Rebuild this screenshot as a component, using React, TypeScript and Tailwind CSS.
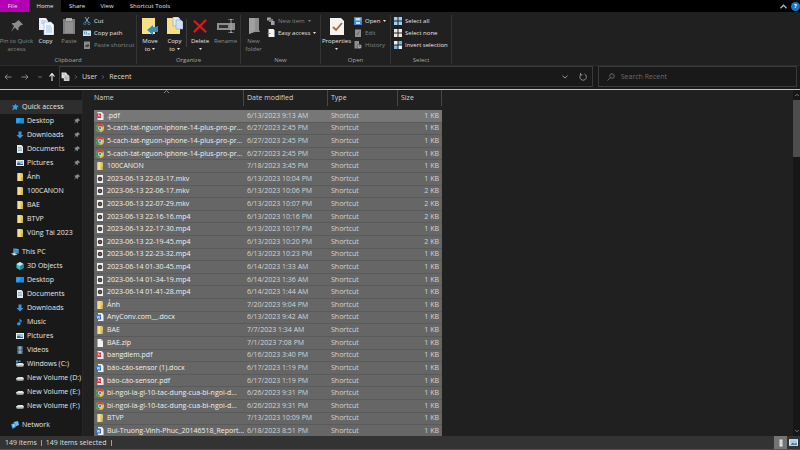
import React from "react";

type IconName =
  | "pdf" | "chrome" | "folder" | "media" | "docx" | "zip" | "star" | "desktop" | "down" | "doc"
  | "pictures" | "pc" | "cube" | "music" | "video" | "windrive" | "drive" | "network";

function Icon({ name, className = "size-2" }: { name: IconName; className?: string }) {
  return (
    <svg viewBox="0 0 16 16" className={`${className} shrink-0`} aria-hidden="true">
      {name === "pdf" && (
        <>
          <path d="M3 0h8l4 4v12H3z" fill="#f1eded" />
          <path d="M1 3h9v9H1z" fill="#c9373b" />
          <path d="M3 10c3-2 3-5 2-5s1 4 4 3" stroke="#fff" fill="none" strokeWidth="1.3" />
        </>
      )}
      {name === "docx" && (
        <>
          <path d="M4 0h8l3 4v12H4z" fill="#edf1f8" />
          <path d="M0 3h10v10H0z" fill="#2f66b5" />
          <path d="M2 5l1.500 6L5 6l1.500 5L8 5" stroke="#fff" fill="none" strokeWidth="1.200" />
        </>
      )}
      {name === "chrome" && (
        <>
          <circle cx="8" cy="8" r="8" fill="#e8c33a" />
          <path d="M8 8L1 4a8 8 0 0 1 14 0z" fill="#d5402f" />
          <path d="M8 8L1 4a8 8 0 0 0 6 12z" fill="#38945a" />
          <circle cx="8" cy="8" r="4" fill="#f4f4f4" />
          <circle cx="8" cy="8" r="2.800" fill="#4a84d8" />
        </>
      )}
      {name === "folder" && (
        <>
          <path d="M3 0h9l2 2v14H3z" fill="#dfc56c" />
          <path d="M3 0h6v16H3z" fill="#f3de92" />
          <path d="M11 9h3v7h-3z" fill="#c9a94b" />
        </>
      )}
      {name === "media" && (
        <>
          <path d="M2 0h12v16H2z" fill="#f1f1f1" />
          <circle cx="8" cy="8" r="4.500" fill="#3b3638" />
          <path d="M7 6l3 2-3 2z" fill="#e98a55" />
        </>
      )}
      {name === "zip" && (
        <>
          <path d="M3 0h7l4 4v12H3z" fill="#f1f1f1" />
          <path d="M10 0l4 4h-4z" fill="#b9b9b9" />
        </>
      )}
      {name === "star" && <path d="M9 1l2 4 5 1-4 3 0 5-4-2-6 3 3-6-3-4h5z" fill="#3aa0dd" />}
      {name === "desktop" && (
        <>
          <path d="M0 2h16v11H0z" fill="#1d8ae0" />
          <path d="M0 13h16v1H0z" fill="#0e5a9c" />
          <path d="M1 3h9l-6 9H1z" fill="#36a3f3" />
        </>
      )}
      {name === "down" && <path d="M5 1h6v7h4l-7 7-7-7h4z" fill="#3f93d6" />}
      {name === "doc" && (
        <>
          <path d="M2 0h9l3 3v13H2z" fill="#dfe9f0" />
          <path d="M4 5h7M4 8h8M4 11h8" stroke="#6f92ab" strokeWidth="1.300" />
        </>
      )}
      {name === "pictures" && (
        <>
          <path d="M0 2h16v12H0z" fill="#e8f0f6" />
          <path d="M2 4h12v5H2z" fill="#8ac4ea" />
          <path d="M2 12V9l4-2 4 3 4-1v3z" fill="#39607d" />
        </>
      )}
      {name === "pc" && (
        <>
          <path d="M5 1l10 1v9L5 10z" fill="#8fd0f4" />
          <path d="M6 2l8 1v7L6 9z" fill="#3b8ed0" />
          <path d="M0 11l7-1 6 3-7 2z" fill="#cfdde6" />
        </>
      )}
      {name === "cube" && (
        <>
          <path d="M8 0l7 4v8l-7 4-7-4V4z" fill="#43b8c8" />
          <path d="M8 0l7 4-7 4-7-4z" fill="#b9eef2" />
          <path d="M8 8l7-4v8l-7 4z" fill="#1c8fa4" />
        </>
      )}
      {name === "music" && (
        <path d="M7 0c1 4 6 4 5 9-1-2-2-3-3-3v6a3.500 3 0 1 1-2-3z" fill="#2c9ce6" />
      )}
      {name === "video" && (
        <>
          <path d="M2 0h12v16H2z" fill="#596069" />
          <path d="M5 1h6v6H5zM5 9h6v6H5z" fill="#7bb4d6" />
          <path d="M3.500 0v16M12.500 0v16" stroke="#16181a" strokeDasharray="1.500 1.500" />
        </>
      )}
      {(name === "drive" || name === "windrive") && (
        <>
          <path d="M0 9l5-3h8l3 3v3l-3 2H3l-3-2z" fill="#8c8f92" />
          <path d="M0 9l5-3h8l3 3-3 2H3z" fill="#e2e4e6" />
        </>
      )}
      {name === "windrive" && <path d="M0 1h4v3H0zM5 1h4v3H5zM0 5h4v3H0z" fill="#24b5e4" />}
      {name === "network" && (
        <>
          <path d="M5 2l9-2 2 8-7 3z" fill="#6cc0ef" />
          <path d="M0 6l8-2 2 8-7 4z" fill="#3391cc" />
          <path d="M2 7l5-1 1 5-4 2z" fill="#8ed6f8" />
        </>
      )}
    </svg>
  );
}

function PinShape({ className }: { className: string }) {
  return (
    <svg viewBox="0 0 16 16" className={`${className} shrink-0`} aria-hidden="true">
      <path d="M10 0l6 6-2 1-1 0-3 3 0 3-1 1-4-4-5 6 4-8-3-3 1-1 3 0 4-3z" fill="#8a8d90" />
    </svg>
  );
}

function Caret() {
  return (
    <svg viewBox="0 0 6 4" className="inline-block h-[2px] w-[3px]" aria-hidden="true">
      <path d="M0 0h6L3 4z" fill="currentColor" />
    </svg>
  );
}

function BigButton({ icon, lines, width, caret, dim }: {
  icon: React.ReactNode; lines: string[]; width: string; caret?: boolean; dim?: boolean;
}) {
  return (
    <button className={`flex shrink-0 flex-col items-center ${width} ${dim ? "text-[#8c8c8c]" : "text-[#e4e4e4]"}`}>
      <span className="flex h-[22px] items-center justify-center">{icon}</span>
      {lines.map((line, i) => (
        <span key={line} className="flex h-2 items-center gap-[2px] whitespace-nowrap leading-[8px]">
          {line}
          {caret && lines.length > 1 && i === lines.length - 1 && <Caret />}
        </span>
      ))}
      {caret && lines.length === 1 && <span className="flex h-2 items-center"><Caret /></span>}
    </button>
  );
}

function SmallButton({ icon, label, caret, dim }: {
  icon: React.ReactNode; label: string; caret?: boolean; dim?: boolean;
}) {
  return (
    <button className={`flex h-3 items-center gap-[3px] whitespace-nowrap ${dim ? "text-[#858585]" : "text-[#e4e4e4]"}`}>
      {icon}
      <span>{label}</span>
      {caret && <Caret />}
    </button>
  );
}

function Group({ label, width, children }: { label: string; width: string; children: React.ReactNode }) {
  return (
    <section aria-label={label} className={`flex shrink-0 flex-col border-r border-[#343434] ${width}`}>
      <div className="flex h-[42px]">{children}</div>
      <div className="text-center leading-[8px] text-[#a8a8a8]">{label}</div>
    </section>
  );
}

function Glyph({ children, className = "size-2", box = "0 0 16 16" }: {
  children: React.ReactNode; className?: string; box?: string;
}) {
  return <svg viewBox={box} className={`${className} shrink-0`} aria-hidden="true">{children}</svg>;
}

const pages = (
  <Glyph className="h-[18px] w-4" box="0 0 16 18">
    <path d="M1 1h7l2 3v9H1z" fill="#e9f1fb" />
    <path d="M6 5h7l3 3v10H6z" fill="#f4f8fd" stroke="#8fb2d9" strokeWidth=".6" />
    <path d="M3 4h4M3 6h3M8 9h5M8 11h6M8 13h6M8 15h6" stroke="#8fb2d9" strokeWidth=".8" />
  </Glyph>
);

function Ribbon() {
  return (
    <div className="flex h-[54px] shrink-0 border-b border-[#2c2c2c] bg-[#202020] pt-[3px] pb-[1px] text-[6px]">
      <Group label="Clipboard" width="w-[137px]">
        <BigButton dim width="w-[33px]" lines={["Pin to Quick", "access"]} icon={<PinShape className="size-3" />} />
        <BigButton width="w-[25px]" lines={["Copy"]} icon={pages} />
        <BigButton dim width="w-[22px]" lines={["Paste"]} icon={
          <Glyph className="h-[18px] w-3" box="0 0 12 18">
            <path d="M0 2h12v15H0z" fill="#7e7e7e" />
            <path d="M3 1h6v3H3z" fill="#b0b0b0" />
            <path d="M2 5h8v11H2z" fill="#909090" />
          </Glyph>
        } />
        <div className="flex flex-col pl-[3px]">
          <SmallButton label="Cut" icon={
            <Glyph>
              <path d="M4 0l7 11M12 0L5 11" stroke="#b8d0e2" strokeWidth="1.500" />
              <circle cx="3.500" cy="13" r="2.300" fill="none" stroke="#3d8fd0" strokeWidth="1.500" />
              <circle cx="12" cy="13" r="2.300" fill="none" stroke="#3d8fd0" strokeWidth="1.500" />
            </Glyph>
          } />
          <SmallButton label="Copy path" icon={
            <Glyph>
              <path d="M0 3h16v11H0z" fill="#cfe6f7" />
              <path d="M2 5l2 6M6 5l2 6M10 10h4" stroke="#286ca5" strokeWidth="1.500" />
            </Glyph>
          } />
          <SmallButton dim label="Paste shortcut" icon={
            <Glyph>
              <path d="M2 1h12v15H2z" fill="#8b8b8b" />
              <path d="M5 12V8h4V5l4 4-4 4v-2" fill="#393939" />
            </Glyph>
          } />
        </div>
      </Group>
      <Group label="Organize" width="w-[104px]">
        <BigButton caret width="w-[26px]" lines={["Move", "to"]} icon={
          <Glyph className="h-[18px] w-4" box="0 0 16 18">
            <path d="M0 1h13v16H0z" fill="#f7df86" />
            <path d="M16 9v6h-5v3l-6-5 6-5v2h2z" fill="#3d8cc0" />
          </Glyph>
        } />
        <BigButton caret width="w-[23px]" lines={["Copy", "to"]} icon={
          <Glyph className="h-[18px] w-4" box="0 0 16 18">
            <path d="M0 1h13v16H0z" fill="#f7df86" />
            <path d="M6 0h5l2 2v7H6z" fill="#e3eefa" stroke="#7ba5d2" strokeWidth=".6" />
            <path d="M9 3h5l2 2v7H9z" fill="#cfe1f5" stroke="#7ba5d2" strokeWidth=".6" />
          </Glyph>
        } />
        <div className="mt-1 h-[28px] border-r border-[#3c3c3c]" />
        <BigButton caret width="w-[26px]" lines={["Delete"]} icon={
          <Glyph className="size-[14px]">
            <path d="M1 2l14 13M15 1L1 15" stroke="#d01c1f" strokeWidth="2.600" />
          </Glyph>
        } />
        <BigButton dim width="w-[25px]" lines={["Rename"]} icon={
          <Glyph className="h-[14px] w-[18px]" box="0 0 18 14">
            <path d="M0 4h18v7H0z" fill="#8e8e8e" />
            <path d="M2 6h9v3H2z" fill="#303030" />
            <path d="M11 0h2l1 1 1-1h2M14 1v12M11 14h2l1-1 1 1h2" stroke="#a5a5a5" fill="none" />
          </Glyph>
        } />
      </Group>
      <Group label="New" width="w-[80px]">
        <BigButton dim width="w-[25px]" lines={["New", "folder"]} icon={
          <Glyph className="h-4 w-3" box="0 0 12 16">
            <path d="M1 0h10v12l1 2H7l-6 2z" fill="#8d8d8d" />
            <path d="M1 0h6v13l-6 3z" fill="#a0a0a0" />
          </Glyph>
        } />
        <div className="flex flex-col pl-[1px]">
          <SmallButton dim caret label="New item" icon={
            <Glyph>
              <path d="M0 1h8v6H0z" fill="#a0a0a0" />
              <path d="M4 4h8v6H4z" fill="#7c7c7c" />
              <path d="M8 8h7v8H8z" fill="#a5a5a5" />
            </Glyph>
          } />
          <SmallButton caret label="Easy access" icon={
            <Glyph>
              <path d="M3 0h10l2 3v13H3z" fill="#f3f3f3" />
              <path d="M1 8h6v2H1z" fill="#4d97d2" />
            </Glyph>
          } />
        </div>
      </Group>
      <Group label="Open" width="w-[70px]">
        <BigButton caret width="w-[31px]" lines={["Properties"]} icon={
          <Glyph className="h-[17px] w-[14px]" box="0 0 14 17">
            <path d="M0 0h11l3 3v14H0z" fill="#f5f3f1" />
            <path d="M3 9l3 3 6-7" stroke="#a9653d" strokeWidth="1.800" fill="none" />
          </Glyph>
        } />
        <div className="flex flex-col pl-[2px]">
          <SmallButton caret label="Open" icon={
            <Glyph>
              <path d="M0 0h16v16H0z" fill="#4787d0" />
              <path d="M3 2h10v5H3zM4 10h8v4H4z" fill="#c5dff7" />
            </Glyph>
          } />
          <SmallButton dim label="Edit" icon={
            <Glyph>
              <path d="M2 1h12v15H2z" fill="#929292" />
              <path d="M5 12l6-7" stroke="#606060" strokeWidth="2" />
            </Glyph>
          } />
          <SmallButton dim label="History" icon={
            <Glyph>
              <path d="M1 0h9v15H1z" fill="#8d8d8d" />
              <circle cx="11" cy="11" r="4.500" fill="#aaa" stroke="#333" />
              <path d="M11 8v3h2" stroke="#333" fill="none" />
            </Glyph>
          } />
        </div>
      </Group>
      <Group label="Select" width="w-[61px]">
        <div className="flex flex-col pl-[3px]">
          {[
            { label: "Select all", a: "#9bd2f7", b: "#9bd2f7" },
            { label: "Select none", a: "#f0e7df", b: "#f0e7df" },
            { label: "Invert selection", a: "#e9eef3", b: "#6fb8ee" },
          ].map(({ label, a, b }) => (
            <SmallButton key={label} label={label} icon={
              <Glyph>
                <path d="M0 0h7v7H0zM9 9h7v7H9z" fill={a} />
                <path d="M9 0h7v7H9zM0 9h7v7H0z" fill={b} />
              </Glyph>
            } />
          ))}
        </div>
      </Group>
    </div>
  );
}

function AddressRow() {
  return (
    <div className="flex h-[23px] shrink-0 bg-[#191919] pr-[3px] pb-[2px]">
      <nav aria-label="History" className="flex w-[59px] shrink-0 items-center">
        <button aria-label="Back" className="flex w-4 justify-center">
          <Glyph><path d="M15 8H2M7 3L2 8l5 5" stroke="#9a9a9a" strokeWidth="1.700" fill="none" /></Glyph>
        </button>
        <button aria-label="Forward" className="flex w-[18px] justify-center">
          <Glyph><path d="M1 8h13M9 3l5 5-5 5" stroke="#9a9a9a" strokeWidth="1.700" fill="none" /></Glyph>
        </button>
        <button aria-label="Recent locations" className="flex w-[11px] justify-center">
          <Glyph className="size-1"><path d="M1 4l7 7 7-7" stroke="#9a9a9a" strokeWidth="3" fill="none" /></Glyph>
        </button>
        <button aria-label="Up" className="flex w-[13px] justify-center">
          <Glyph><path d="M8 16V2M3 7l5-6 5 6" stroke="#f2f2f2" strokeWidth="2.200" fill="none" /></Glyph>
        </button>
      </nav>
      <div className="flex min-w-0 flex-1 items-center border border-[#3b3b3b] text-[#dcdcdc]">
        <Glyph className="ml-[1px] size-[9px]">
          <path d="M1 1h8l2 3v7H1z" fill="#e3e3e3" />
          <path d="M5 5h8l2 3v8H5z" fill="#cdcdcd" />
          <path d="M3 4h4M7 9h5M7 12h5" stroke="#848484" />
        </Glyph>
        {["User", "Recent"].map((part) => (
          <React.Fragment key={part}>
            <Glyph className="mx-[4px] size-1"><path d="M4 1l7 7-7 7" stroke="#8a8a8a" strokeWidth="2.500" fill="none" /></Glyph>
            <button>{part}</button>
          </React.Fragment>
        ))}
        <button aria-label="Previous locations" className="ml-auto">
          <Glyph className="size-[6px]"><path d="M1 4l7 7 7-7" stroke="#a0a0a0" strokeWidth="2.500" fill="none" /></Glyph>
        </button>
        <button aria-label="Refresh" className="mr-[5px] ml-[11px]">
          <Glyph><path d="M4 3a6.500 6.500 0 1 0 7-1M3 0v4h4" stroke="#a0a0a0" strokeWidth="1.700" fill="none" /></Glyph>
        </button>
      </div>
      <label className="ml-[5px] flex w-1/4 items-center gap-[6px] border border-[#3b3b3b] pl-2">
        <Glyph>
          <circle cx="10" cy="6" r="4.500" stroke="#808080" strokeWidth="1.500" fill="none" />
          <path d="M6 10l-5 5" stroke="#808080" strokeWidth="1.500" />
        </Glyph>
        <input aria-label="Search Recent" placeholder="Search Recent" className="min-w-0 flex-1 bg-transparent outline-none placeholder:text-[#6c6c6c]" />
      </label>
    </div>
  );
}

type Place = { icon: IconName; label: string; pinned?: boolean };

const sections: { head: Place; items: Place[] }[] = [
  {
    head: { icon: "star", label: "Quick access" },
    items: [
      { icon: "desktop", label: "Desktop", pinned: true },
      { icon: "down", label: "Downloads", pinned: true },
      { icon: "doc", label: "Documents", pinned: true },
      { icon: "pictures", label: "Pictures", pinned: true },
      { icon: "folder", label: "Ảnh", pinned: true },
      { icon: "folder", label: "100CANON" },
      { icon: "folder", label: "BAE" },
      { icon: "folder", label: "BTVP" },
      { icon: "folder", label: "Vũng Tài 2023" },
    ],
  },
  {
    head: { icon: "pc", label: "This PC" },
    items: [
      { icon: "cube", label: "3D Objects" },
      { icon: "desktop", label: "Desktop" },
      { icon: "doc", label: "Documents" },
      { icon: "down", label: "Downloads" },
      { icon: "music", label: "Music" },
      { icon: "pictures", label: "Pictures" },
      { icon: "video", label: "Videos" },
      { icon: "windrive", label: "Windows (C:)" },
      { icon: "drive", label: "New Volume (D:)" },
      { icon: "drive", label: "New Volume (E:)" },
      { icon: "drive", label: "New Volume (F:)" },
    ],
  },
  { head: { icon: "network", label: "Network" }, items: [] },
];

function Sidebar() {
  return (
    <nav aria-label="Folders" className="flex w-[83px] shrink-0 flex-col gap-[5px] overflow-hidden border-r border-[#262626] bg-[#191919] pt-[10px] text-[#e6e6e6]">
      {sections.map(({ head, items }, i) => (
        <div key={head.label}>
          <button className={`flex h-[14px] w-full items-center gap-[3px] pl-[11px] ${i === 0 ? "bg-[#2e2e2e]" : ""}`}>
            <Icon name={head.icon} />
            {head.label}
          </button>
          {items.map((item) => (
            <button key={item.label} className="flex h-[14px] w-full items-center gap-[3px] whitespace-nowrap pr-[2px] pl-4">
              <Icon name={item.icon} />
              {item.label}
              {item.pinned && <span className="ml-auto"><PinShape className="size-[6px]" /></span>}
            </button>
          ))}
        </div>
      ))}
    </nav>
  );
}

const files: [IconName, string, string, string][] = [
  ["pdf", ".pdf", "6/13/2023 9:13 AM", "1 KB"],
  ["chrome", "5-cach-tat-nguon-iphone-14-plus-pro-pr...", "6/27/2023 2:45 PM", "1 KB"],
  ["chrome", "5-cach-tat-nguon-iphone-14-plus-pro-pr...", "6/27/2023 2:45 PM", "1 KB"],
  ["chrome", "5-cach-tat-nguon-iphone-14-plus-pro-pr...", "6/27/2023 2:45 PM", "1 KB"],
  ["folder", "100CANON", "7/18/2023 3:45 PM", "1 KB"],
  ["media", "2023-06-13 22-03-17.mkv", "6/13/2023 10:04 PM", "1 KB"],
  ["media", "2023-06-13 22-06-17.mkv", "6/13/2023 10:06 PM", "2 KB"],
  ["media", "2023-06-13 22-07-29.mkv", "6/13/2023 10:07 PM", "2 KB"],
  ["media", "2023-06-13 22-16-16.mp4", "6/13/2023 10:16 PM", "2 KB"],
  ["media", "2023-06-13 22-17-30.mp4", "6/13/2023 10:17 PM", "1 KB"],
  ["media", "2023-06-13 22-19-45.mp4", "6/13/2023 10:20 PM", "2 KB"],
  ["media", "2023-06-13 22-23-32.mp4", "6/13/2023 10:23 PM", "1 KB"],
  ["media", "2023-06-14 01-30-45.mp4", "6/14/2023 1:33 AM", "1 KB"],
  ["media", "2023-06-14 01-34-19.mp4", "6/14/2023 1:36 AM", "1 KB"],
  ["media", "2023-06-14 01-41-28.mp4", "6/14/2023 1:44 AM", "1 KB"],
  ["folder", "Ảnh", "7/20/2023 9:04 PM", "1 KB"],
  ["docx", "AnyConv.com__.docx", "6/13/2023 9:42 AM", "1 KB"],
  ["folder", "BAE", "7/7/2023 1:34 AM", "1 KB"],
  ["zip", "BAE.zip", "7/1/2023 7:08 PM", "1 KB"],
  ["pdf", "bangdiem.pdf", "6/16/2023 3:40 PM", "1 KB"],
  ["docx", "báo-cáo-sensor (1).docx", "6/17/2023 1:19 PM", "1 KB"],
  ["pdf", "báo-cáo-sensor.pdf", "6/17/2023 1:19 PM", "1 KB"],
  ["chrome", "bi-ngoi-la-gi-10-tac-dung-cua-bi-ngoi-d...", "6/26/2023 9:31 PM", "1 KB"],
  ["chrome", "bi-ngoi-la-gi-10-tac-dung-cua-bi-ngoi-d...", "6/26/2023 9:31 PM", "1 KB"],
  ["folder", "BTVP", "7/13/2023 10:09 PM", "1 KB"],
  ["docx", "Bui-Truong-Vinh-Phuc_20146518_Report...", "6/18/2023 8:51 PM", "1 KB"],
];

function FileTable() {
  return (
    <div className="min-w-0 flex-1 overflow-hidden pl-[11px]">
      <table className="h-[calc(100%+2px)] w-[348px] table-fixed border-collapse text-[#d4d4d4]">
        <colgroup>
          <col className="w-[150px]" />
          <col className="w-[84px]" />
          <col className="w-[70px]" />
          <col className="w-[44px]" />
        </colgroup>
        <thead>
          <tr className="h-5 align-top">
            {["Name", "Date modified", "Type", "Size"].map((h) => (
              <th key={h} scope="col" className="p-0 text-left font-normal">
                <button className={`relative flex h-4 w-full items-center border-r border-[#484848] ${h === "Name" ? "" : "pl-[3px]"}`}>
                  {h}
                  {h === "Name" && (
                    <Glyph className="absolute top-0 left-[70px] h-[3px] w-[5px]" box="0 0 5 3">
                      <path d="M0 3l2.500-2.500L5 3" stroke="#8a8a8a" fill="none" />
                    </Glyph>
                  )}
                </button>
              </th>
            ))}
          </tr>
        </thead>
        <tbody>
          {files.map(([icon, name, date, size], i) => (
            <tr key={i} className={`border-b border-[#5a5a5a] leading-[10px] ${i === 0 ? "bg-[#777777]" : "bg-[#666666]"}`}>
              <td className="p-0 text-[#efefef]">
                <span className="flex items-center gap-[3px] whitespace-nowrap pl-[2px]">
                  <Icon name={icon} />
                  {name}
                </span>
              </td>
              <td className="p-0 pl-[3px] whitespace-nowrap">{date}</td>
              <td className="p-0 pl-[3px]">Shortcut</td>
              <td className="p-0 pr-[3px] text-right">{size}</td>
            </tr>
          ))}
        </tbody>
      </table>
    </div>
  );
}

export default function App() {
  return (
    <div className="flex h-screen flex-col overflow-hidden bg-[#202020] font-['Open_Sans','Noto_Sans',sans-serif] text-[7px] leading-[10px]">
      <header className="flex h-3 shrink-0 items-center bg-black text-[6px] text-[#e2e2e2]">
        <button className="h-full w-[29px] bg-[#b300b5] pr-1">File</button>
        <button className="h-full w-8 bg-[#202020]">Home</button>
        <button className="h-full w-8">Share</button>
        <button className="h-full w-7">View</button>
        <button className="h-full w-[58px]">Shortcut Tools</button>
        <button aria-label="Collapse ribbon" className="ml-auto">
          <Glyph className="size-[7px]"><path d="M1 12l7-7 7 7" stroke="#b5b5b5" strokeWidth="3" fill="none" /></Glyph>
        </button>
        <button aria-label="Help" className="ml-1 flex size-[9px] items-center justify-center rounded-full bg-[#1877c9] font-bold text-white">?</button>
      </header>
      <Ribbon />
      <AddressRow />
      <main className="flex min-h-0 flex-1 border-t border-[#c4c4c4]">
        <Sidebar />
        <FileTable />
        <div aria-hidden="true" className="flex w-[7px] shrink-0 flex-col items-center bg-[#171717] text-[#8a8a8a]">
          <span className="flex h-[10px] items-center">
            <Glyph className="size-1"><path d="M1 12l7-7 7 7" stroke="#9a9a9a" strokeWidth="3" fill="none" /></Glyph>
          </span>
          <span className="h-[57px] w-full bg-[#4d4d4d]" />
          <span className="mt-auto flex h-[10px] items-center">
            <Glyph className="size-1"><path d="M1 4l7 7 7-7" stroke="#9a9a9a" strokeWidth="3" fill="none" /></Glyph>
          </span>
        </div>
      </main>
      <footer className="flex h-[14px] shrink-0 items-center border-b border-[#5b5154] bg-[#333333] pr-[1px] pl-[5px] text-[#dedede]">
        <span>149 items</span>
        <span className="mx-[4px] h-[6px] border-l border-[#a0a0a0]" />
        <span>149 items selected</span>
        <span className="mx-[4px] h-[6px] border-l border-[#a0a0a0]" />
        <button aria-label="Details view" className="ml-auto flex h-full w-[13px] items-center justify-center bg-[#747474]">
          <Glyph><path d="M5 1h6v14H5z" fill="#e4e4e4" /><path d="M5 5h6M5 9h6" stroke="#aaa" /></Glyph>
        </button>
        <button aria-label="Large icons view" className="flex h-full w-3 items-center justify-center">
          <Glyph className="size-[9px]">
            <path d="M0 2h16v12H0z" fill="#dbe8f1" />
            <path d="M2 4h12v5H2z" fill="#9ccbe8" />
            <path d="M2 12l4-3 4 1 4-1v3z" fill="#315a77" />
          </Glyph>
        </button>
      </footer>
    </div>
  );
}
